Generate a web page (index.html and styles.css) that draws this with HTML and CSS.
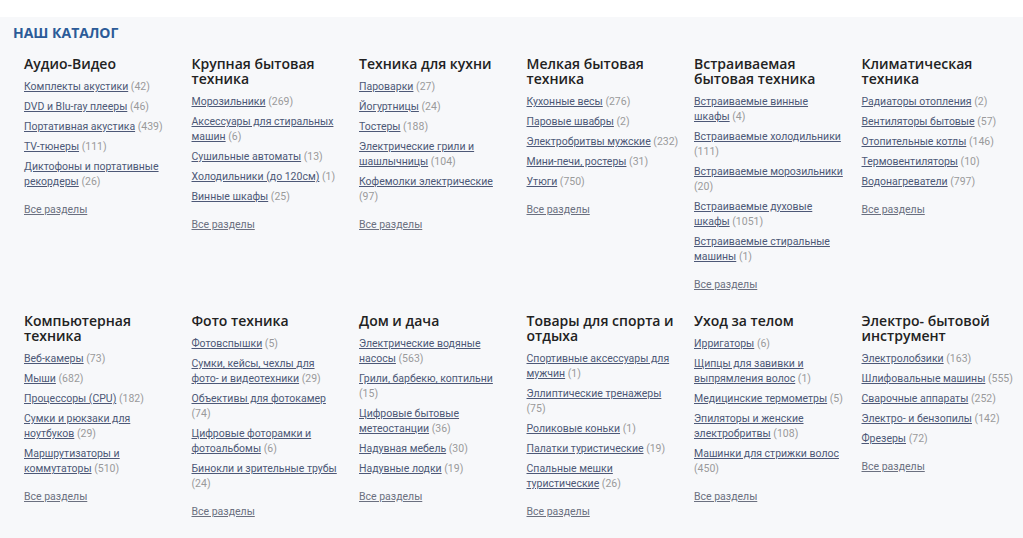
FILE: index.html
```html
<!DOCTYPE html>
<html lang="ru">
<head>
    <meta charset="UTF-8">
    <title>Наш каталог</title>
    <link rel="stylesheet" href="styles.css">
</head>
<body>

<div class="catalog">
    <h1 class="catalog-title">Наш каталог</h1>

    <div class="catalog-grid">
        <div class="cat">
            <h3>Аудио-Видео</h3>
            <ul>
                <li><a href="#">Комплекты акустики</a> <span>(42)</span></li>
                <li><a href="#">DVD и Blu-ray плееры</a> <span>(46)</span></li>
                <li><a href="#">Портативная акустика</a> <span>(439)</span></li>
                <li><a href="#">TV-тюнеры</a> <span>(111)</span></li>
                <li><a href="#">Диктофоны и портативные рекордеры</a> <span>(26)</span></li>
            </ul>
            <a class="all" href="#">Все разделы</a>
        </div>
        <div class="cat">
            <h3>Крупная бытовая техника</h3>
            <ul>
                <li><a href="#">Морозильники</a> <span>(269)</span></li>
                <li><a href="#">Аксессуары для стиральных машин</a> <span>(6)</span></li>
                <li><a href="#">Сушильные автоматы</a> <span>(13)</span></li>
                <li><a href="#">Холодильники (до 120см)</a> <span>(1)</span></li>
                <li><a href="#">Винные шкафы</a> <span>(25)</span></li>
            </ul>
            <a class="all" href="#">Все разделы</a>
        </div>
        <div class="cat">
            <h3>Техника для кухни</h3>
            <ul>
                <li><a href="#">Пароварки</a> <span>(27)</span></li>
                <li><a href="#">Йогуртницы</a> <span>(24)</span></li>
                <li><a href="#">Тостеры</a> <span>(188)</span></li>
                <li><a href="#">Электрические грили и шашлычницы</a> <span>(104)</span></li>
                <li><a href="#">Кофемолки электрические</a> <span>(97)</span></li>
            </ul>
            <a class="all" href="#">Все разделы</a>
        </div>
        <div class="cat">
            <h3>Мелкая бытовая техника</h3>
            <ul>
                <li><a href="#">Кухонные весы</a> <span>(276)</span></li>
                <li><a href="#">Паровые швабры</a> <span>(2)</span></li>
                <li class="nowrap"><a href="#">Электробритвы мужские</a> <span>(232)</span></li>
                <li><a href="#">Мини-печи, ростеры</a> <span>(31)</span></li>
                <li><a href="#">Утюги</a> <span>(750)</span></li>
            </ul>
            <a class="all" href="#">Все разделы</a>
        </div>
        <div class="cat">
            <h3>Встраиваемая бытовая техника</h3>
            <ul>
                <li><a href="#">Встраиваемые винные шкафы</a> <span>(4)</span></li>
                <li><a href="#">Встраиваемые холодильники</a> <span>(111)</span></li>
                <li><a href="#">Встраиваемые морозильники</a> <span>(20)</span></li>
                <li><a href="#">Встраиваемые духовые шкафы</a> <span>(1051)</span></li>
                <li><a href="#">Встраиваемые стиральные машины</a> <span>(1)</span></li>
            </ul>
            <a class="all" href="#">Все разделы</a>
        </div>
        <div class="cat">
            <h3>Климатическая техника</h3>
            <ul>
                <li><a href="#">Радиаторы отопления</a> <span>(2)</span></li>
                <li><a href="#">Вентиляторы бытовые</a> <span>(57)</span></li>
                <li><a href="#">Отопительные котлы</a> <span>(146)</span></li>
                <li><a href="#">Термовентиляторы</a> <span>(10)</span></li>
                <li><a href="#">Водонагреватели</a> <span>(797)</span></li>
            </ul>
            <a class="all" href="#">Все разделы</a>
        </div>

        <div class="cat">
            <h3>Компьютерная техника</h3>
            <ul>
                <li><a href="#">Веб-камеры</a> <span>(73)</span></li>
                <li><a href="#">Мыши</a> <span>(682)</span></li>
                <li><a href="#">Процессоры (CPU)</a> <span>(182)</span></li>
                <li><a href="#">Сумки и рюкзаки для ноутбуков</a> <span>(29)</span></li>
                <li><a href="#">Маршрутизаторы и коммутаторы</a> <span>(510)</span></li>
            </ul>
            <a class="all" href="#">Все разделы</a>
        </div>
        <div class="cat">
            <h3>Фото техника</h3>
            <ul>
                <li><a href="#">Фотовспышки</a> <span>(5)</span></li>
                <li><a href="#">Сумки, кейсы, чехлы для фото- и видеотехники</a> <span>(29)</span></li>
                <li><a href="#">Объективы для фотокамер</a> <span>(74)</span></li>
                <li><a href="#">Цифровые фоторамки и фотоальбомы</a> <span>(6)</span></li>
                <li><a href="#">Бинокли и зрительные трубы</a> <span>(24)</span></li>
            </ul>
            <a class="all" href="#">Все разделы</a>
        </div>
        <div class="cat">
            <h3>Дом и дача</h3>
            <ul>
                <li><a href="#">Электрические водяные насосы</a> <span>(563)</span></li>
                <li><a href="#">Грили, барбекю, коптильни</a> <span>(15)</span></li>
                <li><a href="#">Цифровые бытовые метеостанции</a> <span>(36)</span></li>
                <li><a href="#">Надувная мебель</a> <span>(30)</span></li>
                <li><a href="#">Надувные лодки</a> <span>(19)</span></li>
            </ul>
            <a class="all" href="#">Все разделы</a>
        </div>
        <div class="cat">
            <h3>Товары для спорта и отдыха</h3>
            <ul>
                <li><a href="#">Спортивные аксессуары для мужчин</a> <span>(1)</span></li>
                <li><a href="#">Эллиптические тренажеры</a> <span>(75)</span></li>
                <li><a href="#">Роликовые коньки</a> <span>(1)</span></li>
                <li><a href="#">Палатки туристические</a> <span>(19)</span></li>
                <li><a href="#">Спальные мешки туристические</a> <span>(26)</span></li>
            </ul>
            <a class="all" href="#">Все разделы</a>
        </div>
        <div class="cat">
            <h3>Уход за телом</h3>
            <ul>
                <li><a href="#">Ирригаторы</a> <span>(6)</span></li>
                <li><a href="#">Щипцы для завивки и выпрямления волос</a> <span>(1)</span></li>
                <li><a href="#">Медицинские термометры</a> <span>(5)</span></li>
                <li><a href="#">Эпиляторы и женские электробритвы</a> <span>(108)</span></li>
                <li><a href="#">Машинки для стрижки волос</a> <span>(450)</span></li>
            </ul>
            <a class="all" href="#">Все разделы</a>
        </div>
        <div class="cat">
            <h3>Электро- бытовой инструмент</h3>
            <ul>
                <li><a href="#">Электролобзики</a> <span>(163)</span></li>
                <li class="nowrap"><a href="#">Шлифовальные машины</a> <span>(555)</span></li>
                <li><a href="#">Сварочные аппараты</a> <span>(252)</span></li>
                <li><a href="#">Электро- и бензопилы</a> <span>(142)</span></li>
                <li><a href="#">Фрезеры</a> <span>(72)</span></li>
            </ul>
            <a class="all" href="#">Все разделы</a>
        </div>
    </div>
</div>

</body>
</html>
```

FILE: styles.css
```css
body {
    margin: 0;
    background: #fff;
    font-family: "Open Sans", Arial, sans-serif;
}
.catalog {
    margin-top: 17px;
    padding: 8px 0 20px 13px;
    background: #f7f8fa;
    min-height: 500px;
}
.catalog-title {
    margin: 0;
    font-size: 14px;
    line-height: 16px;
    font-weight: bold;
    text-transform: uppercase;
    color: #2c5b98;
}
.catalog-grid {
    display: grid;
    grid-template-columns: repeat(6, 167.5px);
    row-gap: 21px;
    margin-top: 15px;
    padding-left: 11px;
}
.cat h3 {
    margin: 0 0 8px;
    max-width: 150px;
    font-size: 14px;
    line-height: 15px;
    font-weight: 600;
    color: #222;
}
.cat ul {
    margin: 0;
    padding: 0;
    max-width: 150px;
    list-style: none;
}
.cat li {
    margin-bottom: 5px;
    font-family: Roboto, Arial, sans-serif;
    font-size: 10.5px;
    line-height: 15px;
}
.cat li.nowrap {
    white-space: nowrap;
}
.cat a {
    color: #4d5877;
    text-decoration: underline;
}
.cat li span {
    color: #9a9a9a;
}
.cat .all {
    display: block;
    margin-top: 13px;
    font-family: Roboto, Arial, sans-serif;
    font-size: 10.5px;
    line-height: 15px;
    color: #6b7080;
}
```
